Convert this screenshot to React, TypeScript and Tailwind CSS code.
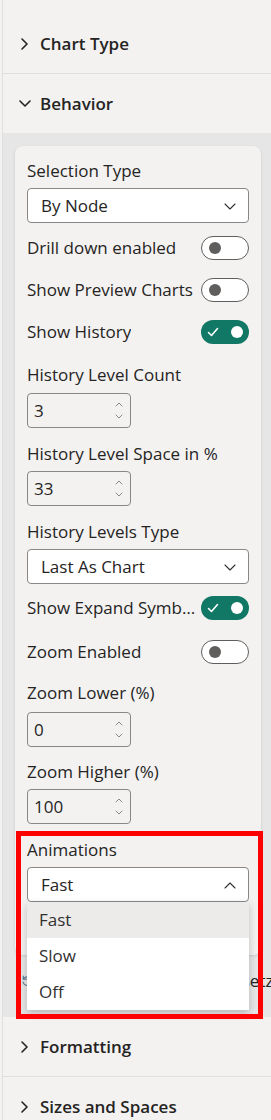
import React from "react";

const font = { fontFamily: '"Open Sans", "Noto Sans", sans-serif' };

function Chevron({ dir }: { dir: "right" | "down" | "up" }) {
  const d =
    dir === "right" ? "M3 1l5 5-5 5" : dir === "down" ? "M1 3l5 5 5-5" : "M1 8l5-5 5 5";
  return (
    <svg width="12" height="12" viewBox="0 0 12 12" fill="none" stroke="#252423" strokeWidth="1.6" strokeLinecap="round" strokeLinejoin="round">
      <path d={d} />
    </svg>
  );
}

function SectionHeader({ title, open }: { title: string; open?: boolean }) {
  return (
    <div className="flex items-center h-[59px] pl-[16px] gap-[9px]">
      <Chevron dir={open ? "down" : "right"} />
      <span className="text-[17px] font-semibold text-[#252423]">{title}</span>
    </div>
  );
}

function Label({ children, className = "" }: { children: React.ReactNode; className?: string }) {
  return <div className={"text-[17px] leading-[22px] text-[#252423] " + className}>{children}</div>;
}

function Select({ value, open, className = "" }: { value: string; open?: boolean; className?: string }) {
  return (
    <div className={"flex items-center justify-between h-[35px] bg-white border border-[#8a8886] rounded-[4px] pl-[13px] pr-[12px] " + className}>
      <span className="text-[17px] text-[#252423]">{value}</span>
      <svg width="12" height="8" viewBox="0 0 12 8" fill="none" stroke="#323130" strokeWidth="1.1" strokeLinecap="round" strokeLinejoin="round">
        <path d={open ? "M1 7l5-5 5 5" : "M1 2l5 5 5-5"} />
      </svg>
    </div>
  );
}

function NumberInput({ value, className = "" }: { value: string; className?: string }) {
  return (
    <div className={"flex items-center justify-between w-[104px] h-[35px] border border-[#8a8886] rounded-[4px] pl-[6px] pr-[7px] " + className}>
      <span className="text-[17px] text-[#252423]">{value}</span>
      <div className="flex flex-col gap-[7px]">
        <svg width="8" height="5" viewBox="0 0 8 5" fill="none" stroke="#8a8886" strokeWidth="1" strokeLinecap="round">
          <path d="M1 4l3-3 3 3" />
        </svg>
        <svg width="8" height="5" viewBox="0 0 8 5" fill="none" stroke="#8a8886" strokeWidth="1" strokeLinecap="round">
          <path d="M1 1l3 3 3-3" />
        </svg>
      </div>
    </div>
  );
}

function Toggle({ on }: { on?: boolean }) {
  if (on) {
    return (
      <div className="flex items-center justify-between w-[48px] h-[24px] rounded-full bg-[#117865] px-[6px] shrink-0">
        <svg width="12" height="10" viewBox="0 0 12 10" fill="none" stroke="white" strokeWidth="1.6" strokeLinecap="round" strokeLinejoin="round">
          <path d="M1.5 5.5l3 3 6-7" />
        </svg>
        <div className="w-[12px] h-[12px] rounded-full bg-white" />
      </div>
    );
  }
  return (
    <div className="flex items-center w-[48px] h-[24px] rounded-full bg-white border border-[#605e5c] pl-[7px] shrink-0">
      <div className="w-[12px] h-[12px] rounded-full bg-[#605e5c]" />
    </div>
  );
}

function ToggleRow({ label, on, className = "" }: { label: string; on?: boolean; className?: string }) {
  return (
    <div className={"flex items-center justify-between h-[24px] gap-[4px] " + className}>
      <span className="text-[17px] text-[#252423] truncate">{label}</span>
      <Toggle on={on} />
    </div>
  );
}

export default function App() {
  return (
    <div className="relative w-[271px] h-[1120px] overflow-hidden bg-[#f3f2f1] pl-[2px]" style={font}>
      <div className="h-full border-l border-[#e1dfdd]">
        <div className="h-[14px]" />
        <div className="border-b border-[#e1dfdd]">
          <SectionHeader title="Chart Type" />
        </div>
        <SectionHeader title="Behavior" open />

        <div className="bg-[#e6e6e6] pt-[13px] pl-[12px] pr-[10px] h-[884px] overflow-hidden">
          <div className="w-[246px] h-[809px] bg-[#f3f2f1] rounded-[8px] shadow-[0_1px_3px_rgba(0,0,0,0.12)] px-[12px] pt-[14px]">
            <Label>Selection Type</Label>
            <Select value="By Node" className="mt-[6px]" />
            <ToggleRow label="Drill down enabled" className="mt-[13px]" />
            <ToggleRow label="Show Preview Charts" className="mt-[18px]" />
            <ToggleRow label="Show History" on className="mt-[18px]" />
            <Label className="mt-[20px]">History Level Count</Label>
            <NumberInput value="3" className="mt-[7px]" />
            <Label className="mt-[15px]">History Level Space in %</Label>
            <NumberInput value="33" className="mt-[6px]" />
            <Label className="mt-[15px]">History Levels Type</Label>
            <Select value="Last As Chart" className="mt-[6px]" />
            <ToggleRow label="Show Expand Symbols" on className="mt-[12px]" />
            <ToggleRow label="Zoom Enabled" className="mt-[20px]" />
            <Label className="mt-[18px]">Zoom Lower (%)</Label>
            <NumberInput value="0" className="mt-[8px]" />
            <Label className="mt-[14px]">Zoom Higher (%)</Label>
            <NumberInput value="100" className="mt-[6px]" />
            <Label className="mt-[15px]">Animations</Label>
            <Select value="Fast" open className="mt-[6px]" />
          </div>
          <div className="flex items-center gap-[12px] h-[52px] pl-[6px] whitespace-nowrap">
            <svg width="12" height="12" viewBox="0 0 12 12" fill="none" stroke="#5b7e96" strokeWidth="1.2" strokeLinecap="round" className="shrink-0">
              <path d="M2.5 4a4.2 4.2 0 1 1-0.5 3" />
              <path d="M2.3 1.2v3h3" />
            </svg>
            <span className="text-[17px] text-[#252423]">Auf Standardwert zurücksetzen</span>
          </div>
        </div>

        <div className="border-b border-[#e1dfdd]">
          <SectionHeader title="Formatting" />
        </div>
        <SectionHeader title="Sizes and Spaces" />
      </div>

      {/* open dropdown list */}
      <div className="absolute left-[27px] top-[902px] w-[222px] bg-white shadow-[0_3px_8px_rgba(0,0,0,0.22)]">
        <div className="h-[36px] flex items-center pl-[12px] bg-[#edebe9] text-[17px] text-[#323130]">Fast</div>
        <div className="h-[36px] flex items-center pl-[12px] text-[17px] text-[#323130]">Slow</div>
        <div className="h-[36px] flex items-center pl-[12px] text-[17px] text-[#323130]">Off</div>
      </div>

      {/* red highlight box */}
      <div className="absolute left-[16px] top-[831px] w-[247px] h-[188px] border-[5px] border-[#ff0000]" />
    </div>
  );
}
